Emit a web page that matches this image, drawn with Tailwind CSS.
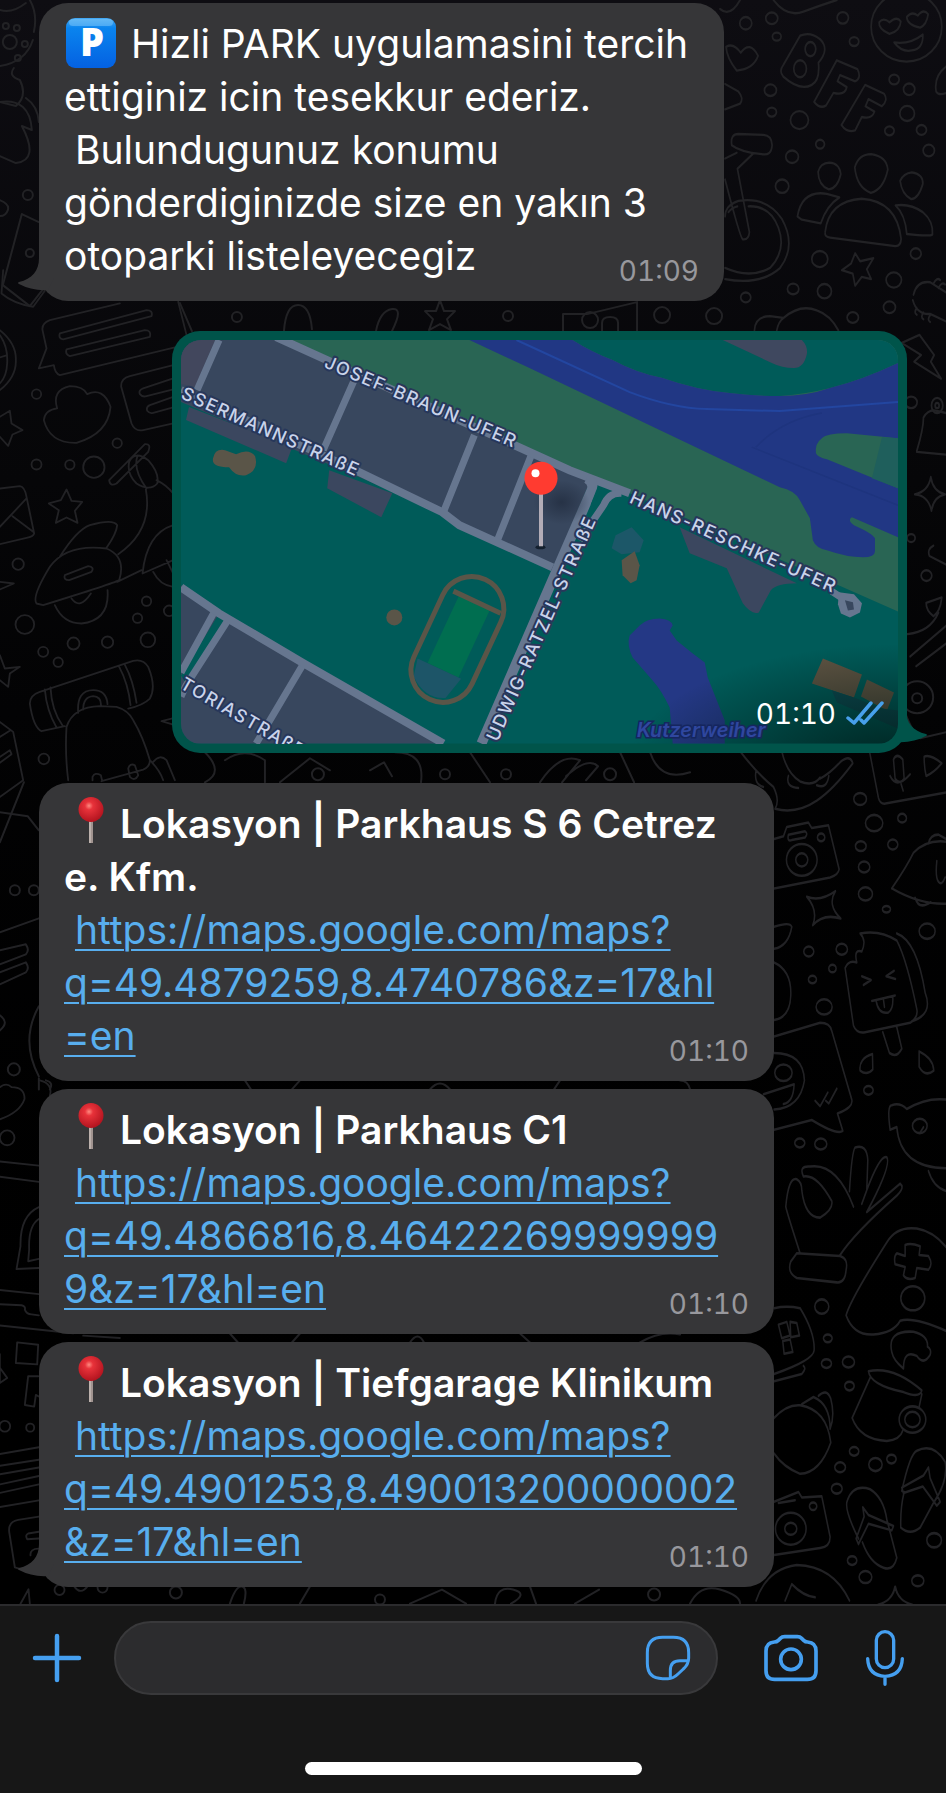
<!DOCTYPE html>
<html lang="tr">
<head>
<meta charset="utf-8">
<meta name="viewport" content="width=device-width, initial-scale=1">
<title>Hizli PARK</title>
<script src="https://cdn.jsdelivr.net/npm/@tailwindcss/browser@4"></script>
</head>
<body class="flex min-h-screen flex-col bg-black font-['Inter','Noto_Sans',sans-serif] text-white">

<main class="relative flex flex-1 flex-col overflow-hidden bg-linear-to-b from-[#0e0d12] via-[#060608] via-30% to-black pt-[3px] pr-[39px] pb-[17px] pl-[39px]">

  <!-- Doodle wallpaper -->
  <svg class="absolute inset-0 h-full w-full" viewBox="0 0 946 1603" preserveAspectRatio="xMidYMin slice" fill="none" stroke="#222225" stroke-width="2" stroke-linecap="round" stroke-linejoin="round" aria-hidden="true">
    <defs>
      <path id="star" d="M0-15L4-4 15-4 7 4 11 15 0 9-11 15-7 4-15-4-4-4Z"/>
      <path id="spark" d="M0-18Q3-3 17 0 3 3 0 17-3 3-17 0-3-3 0-18Z"/>
    </defs>
    <!-- top left -->
    <path d="M0 10Q12 14 26 3M30 0Q38 14 34 32M0 66Q26 62 33 40M14 68q-6 8 6 12Q28 96 16 106L0 102M26 98q12 8 13 24M0 102Q30 98 32 130L22 126Q40 160 16 163L0 156M0 200q10 4 8 10t-8 6M22 214L39 222M22 214L3 285 30 306 44 288"/>
    <circle cx="10" cy="42" r="7"/><circle cx="6" cy="26" r="3"/><circle cx="17" cy="28" r="3"/><circle cx="25" cy="44" r="3"/><circle cx="18" cy="58" r="3"/><circle cx="28" cy="195" r="5"/><circle cx="30" cy="253" r="4"/>
    <!-- between first bubble and map -->
    <path d="M180 303L192 331M284 331q2-26 14-26t14 24M376 331q4-20 16-22t0 22M563 331V314h24l50-12v29M602 331v-8q0-6 8-6t8 6v8"/>
    <use href="#star" x="440" y="315"/><circle cx="237" cy="317" r="5"/><circle cx="508" cy="316" r="5"/><circle cx="590" cy="320" r="8"/><circle cx="662" cy="315" r="8"/><circle cx="714" cy="316" r="8"/>
    <!-- right column, upper part -->
    <g transform="translate(720 0) scale(.3333 .4464)">
      <g stroke-width="5.2">
        <path d="M0 20Q30 40 60 0M160 0Q200 40 250 26T350 0M50 158Q20 130 18 105 40 95 62 118 90 90 114 125 100 155 50 158ZM15 188L55 205Q72 220 60 232L15 245M190 145L240 80Q270 70 300 88 330 110 295 140 300 180 275 190 240 205 190 172 175 160 190 145ZM350 135L412 155Q425 175 405 182L360 168 352 182 380 195Q375 215 340 208L318 236Q300 245 282 228ZM435 190L492 210Q505 225 485 238L445 222 436 238 463 250Q455 268 425 262L405 292Q380 298 364 280Z"/>
        <circle cx="271" cy="110" r="16"/><circle cx="240" cy="154" r="19"/>
        <ellipse cx="559" cy="60" rx="106" ry="78"/><path d="M508 76Q475 65 477 50 490 38 508 50 530 35 542 48 540 70 508 76ZM600 62Q560 55 560 38 575 24 593 35 610 18 624 32 620 55 600 62ZM522 95Q570 100 608 77 610 110 575 113 545 118 522 95Z"/>
        <path d="M680 148Q640 170 648 205 655 215 680 208M35 325Q30 300 55 300L130 302Q155 303 156 325 154 350 125 345Q60 340 35 325ZM98 345L52 378 88 520Q86 538 68 536 60 532 15 402M15 355L50 342M15 485Q15 460 55 450 140 440 185 490 230 550 180 600 120 640 15 625M25 475Q35 465 52 462M85 462Q150 460 175 510 200 560 150 600 90 625 15 600"/>
        <path d="M328 364Q358 365 362 390 352 422 326 424 295 415 294 385 300 365 328 364ZM453 345Q500 350 503 380 490 425 452 432 410 420 404 375 415 345 453 345ZM575 386Q610 390 608 412 595 445 573 446 545 435 540 405 550 388 575 386ZM315 520Q325 450 425 445 530 450 543 535 542 552 525 551L330 532Q313 530 315 520ZM232 485Q245 425 320 434L358 442Q320 460 302 500L245 492ZM526 460Q570 455 608 475 640 495 637 525 630 530 560 524Q555 480 526 460Z"/>
        <path d="M405 567L420 585 460 578 440 603 453 625 425 620 405 640 398 613 365 605 393 590ZM103 740Q105 708 150 708L190 712Q240 680 290 695 330 705 355 740M170 740Q175 720 190 712M580 660Q590 628 630 632L678 655M578 672Q590 705 630 703L678 720M640 635q10-15 20-8M655 645q10-15 20-8M590 690q-10 10 0 15M610 700q-10 10 0 15M630 706q-10 10 0 15M545 768L598 750 642 795 632 810 663 848 582 810 603 795Z"/>
        <path d="M590 1010Q610 960 610 935 625 915 650 920L678 925M590 1012L678 1018M632 1068Q638 1100 675 1107 640 1112 634 1144 625 1110 584 1107 625 1100 632 1068ZM640 1222Q620 1230 628 1245L680 1265M618 1350L665 1338Q660 1370 640 1380 618 1368 618 1350ZM562 1420Q630 1415 655 1372M570 1470L680 1400M588 1492L680 1440"/><circle cx="651" cy="908" r="17"/><circle cx="651" cy="908" r="6"/>
        <g><ellipse cx="77" cy="52" rx="18" ry="14"/><ellipse cx="155" cy="41" rx="18" ry="13"/><ellipse cx="368" cy="40" rx="17" ry="13"/><ellipse cx="402" cy="93" rx="14" ry="10"/><ellipse cx="170" cy="82" rx="13" ry="9"/><ellipse cx="151" cy="202" rx="18" ry="13"/><ellipse cx="155" cy="251" rx="14" ry="10"/><ellipse cx="238" cy="269" rx="27" ry="20"/><ellipse cx="300" cy="323" rx="13" ry="10"/><ellipse cx="216" cy="351" rx="19" ry="14"/><ellipse cx="186" cy="417" rx="20" ry="15"/><ellipse cx="522" cy="178" rx="15" ry="11"/><ellipse cx="567" cy="200" rx="17" ry="13"/><ellipse cx="561" cy="254" rx="22" ry="17"/><ellipse cx="604" cy="291" rx="15" ry="11"/><ellipse cx="508" cy="293" rx="14" ry="10"/><ellipse cx="626" cy="337" rx="17" ry="13"/><ellipse cx="587" cy="568" rx="16" ry="12"/><ellipse cx="299" cy="580" rx="24" ry="18"/><ellipse cx="521" cy="627" rx="23" ry="17"/><ellipse cx="219" cy="647" rx="17" ry="12"/><ellipse cx="313" cy="652" rx="21" ry="16"/><ellipse cx="77" cy="666" rx="15" ry="11"/><ellipse cx="508" cy="688" rx="18" ry="13"/><ellipse cx="398" cy="711" rx="17" ry="12"/><ellipse cx="573" cy="901" rx="18" ry="13"/><ellipse cx="573" cy="1205" rx="12" ry="9"/><ellipse cx="619" cy="1289" rx="16" ry="12"/></g>
      </g>
    </g>
    <circle cx="917" cy="697" r="16"/><circle cx="917" cy="698" r="5"/><path d="M904 710Q912 732 920 738L946 732"/>
    <!-- right column, lower part -->
    <g transform="translate(720 740) scale(.3333 .5485)" stroke-width="4.6">
      <path d="M60 20Q110 60 160 85 180 110 165 125 230 135 290 110 340 90 398 42 390 25 360 40 330 60 300 70M185 20Q200 60 240 75 280 85 300 68M108 55Q100 80 130 85M205 65Q195 85 235 87M290 82Q320 90 326 65M448 20L475 105Q480 118 500 115L680 95M520 35Q530 22 548 35L552 70Q540 82 525 70ZM510 65Q530 90 570 62M543 80L549 92M612 30Q630 25 665 42 640 60 618 65 612 50 612 30ZM162 180L190 175 200 158 265 150 275 160 325 155 357 235Q355 245 330 250L162 270M205 172Q200 185 215 182L255 177Q265 170 255 166Z"/>
      <ellipse cx="245" cy="218" rx="46" ry="29"/><ellipse cx="245" cy="218" rx="18" ry="12"/><ellipse cx="303" cy="177" rx="11" ry="7"/>
      <path d="M260 285Q300 295 346 275 320 300 362 325 310 315 278 337 295 310 260 285ZM515 270Q560 230 580 205 620 180 680 185M515 270Q600 300 680 298M585 287Q595 310 632 295M625 188Q630 172 655 172L678 180M650 220q-5 30 5 38t20-8M162 340Q210 330 215 340 205 375 162 380M162 405Q215 420 212 465 210 505 162 510"/>
      <path d="M420 352Q440 365 425 385 400 380 410 405 385 400 375 415L400 520Q410 535 435 532L570 515Q595 505 590 490 560 400 530 365 480 345 420 352ZM530 352Q590 365 615 460 640 500 575 512M488 532L508 570Q530 580 545 562L530 523M425 430L453 437 430 446M522 420L498 430 526 435M455 475L525 465M468 475Q475 500 505 496 520 490 518 468M490 473L493 486M162 540L300 515Q330 515 335 530L395 655Q400 670 352 680L368 712Q350 720 275 692L162 710M162 570Q250 570 253 620 240 670 162 673M130 645L222 627Q220 660 190 663M285 657L300 667 323 642M317 657L326 662 350 635M457 572Q415 580 420 602 440 612 458 600ZM597 567Q640 580 641 602 615 615 597 595ZM510 710Q500 665 515 665 540 660 560 672 620 650 680 655M510 710L530 705Q540 780 680 780M625 785Q640 815 680 822M600 715L610 705"/>
      <ellipse cx="190" cy="606" rx="26" ry="15"/><ellipse cx="599" cy="703" rx="22" ry="13"/>
      <path d="M240 935Q200 860 197 850 205 795 230 800 245 805 245 820 255 870 300 870 340 855 335 840 290 790 250 795 235 775 270 777 350 770 400 850M388 822Q395 750 405 742 440 735 443 765L440 820 425 845M440 820Q480 755 500 760 515 775 440 860L540 808Q555 815 530 830 400 900 358 940M230 935L360 940Q385 945 378 965 375 990 350 988L230 980Q200 970 212 950ZM378 1048Q390 1020 500 915 530 885 590 890 640 895 680 925M378 1048Q400 1085 460 1083 520 1080 540 1058 580 1050 680 1077M555 920Q570 915 600 922L597 938 625 940Q640 955 625 965L590 962 585 980Q560 985 550 975L555 960 525 955Q520 940 530 935L555 940Z"/>
      <ellipse cx="578" cy="1017" rx="36" ry="22"/>
      <path d="M162 1035Q200 1030 240 1035 285 1080 282 1112 280 1130 162 1155M162 1168L245 1155Q260 1145 250 1140M175 1065L200 1060 210 1085 185 1090ZM210 1060L230 1062 238 1085 212 1088ZM188 1095L210 1092 218 1115 192 1118ZM515 1115Q500 1075 580 1078 625 1085 622 1105 635 1110 630 1120 610 1140 590 1122 550 1110 550 1145 520 1130 515 1115ZM445 1150Q520 1140 605 1185 600 1200 550 1188 450 1175 445 1150ZM450 1162L396 1235Q420 1275 500 1277 540 1275 548 1258M605 1192L597 1215M162 1235Q200 1210 240 1212 320 1220 332 1280 300 1335 240 1337 190 1325 162 1300M245 1210L280 1197Q330 1210 330 1255 345 1230 332 1200 320 1180 295 1195M162 1388L235 1370 245 1380 305 1378 330 1452Q330 1470 300 1472L162 1485M175 1390L225 1385"/>
      <ellipse cx="577" cy="1238" rx="40" ry="24"/><ellipse cx="577" cy="1238" rx="23" ry="14"/><ellipse cx="212" cy="1437" rx="46" ry="29"/><ellipse cx="212" cy="1437" rx="18" ry="11"/><ellipse cx="279" cy="1396" rx="11" ry="7"/>
      <path d="M415 1455Q370 1400 382 1385 400 1355 450 1365 490 1380 500 1420L530 1490Q520 1515 490 1508 450 1500 427 1462M408 1455L432 1415 428 1398 445 1412 520 1432 515 1440 445 1428 415 1465ZM545 1368Q570 1300 590 1295 640 1280 675 1315 685 1350 640 1390L600 1435Q570 1450 542 1435 540 1400 552 1370M545 1362L610 1340 625 1325 630 1345 660 1388 650 1395 608 1360 550 1372ZM108 1568Q140 1510 230 1503 340 1505 388 1568M195 1568L215 1538Q250 1560 285 1562"/>
      <g><ellipse cx="420" cy="107" rx="19" ry="11"/><ellipse cx="462" cy="151" rx="26" ry="15"/><ellipse cx="546" cy="142" rx="13" ry="8"/><ellipse cx="518" cy="190" rx="15" ry="9"/><ellipse cx="422" cy="193" rx="16" ry="9"/><ellipse cx="432" cy="231" rx="17" ry="10"/><ellipse cx="436" cy="280" rx="21" ry="12"/><ellipse cx="499" cy="308" rx="12" ry="6"/><ellipse cx="621" cy="348" rx="24" ry="14"/><ellipse cx="266" cy="385" rx="15" ry="9"/><ellipse cx="365" cy="381" rx="17" ry="10"/><ellipse cx="337" cy="416" rx="11" ry="7"/><ellipse cx="277" cy="436" rx="12" ry="7"/><ellipse cx="312" cy="486" rx="24" ry="14"/><ellipse cx="445" cy="638" rx="14" ry="8"/><ellipse cx="239" cy="734" rx="15" ry="8"/><ellipse cx="302" cy="736" rx="18" ry="10"/><ellipse cx="305" cy="1032" rx="21" ry="13"/><ellipse cx="323" cy="1090" rx="13" ry="7"/><ellipse cx="319" cy="1136" rx="15" ry="8"/><ellipse cx="385" cy="1133" rx="18" ry="10"/><ellipse cx="388" cy="1177" rx="14" ry="8"/><ellipse cx="402" cy="1296" rx="14" ry="8"/><ellipse cx="360" cy="1325" rx="16" ry="9"/><ellipse cx="466" cy="1320" rx="20" ry="12"/><ellipse cx="514" cy="1310" rx="14" ry="8"/><ellipse cx="350" cy="1364" rx="16" ry="9"/><ellipse cx="642" cy="1458" rx="22" ry="13"/><ellipse cx="396" cy="1495" rx="14" ry="8"/><ellipse cx="436" cy="1525" rx="19" ry="11"/><ellipse cx="593" cy="1532" rx="18" ry="10"/></g>
    </g>
    <!-- left column beside the map -->
    <g transform="translate(0 270) scale(.3333)" stroke-width="5.5">
      <path d="M10 0L5 70Q40 100 100 110L135 62M0 180Q50 220 48 270 50 320 0 360M0 195Q25 230 22 280 20 320 0 340M0 262L22 255M360 100L150 150Q125 160 128 180L140 235 117 295 162 285Q165 310 180 315L525 232M180 190L440 120Q460 120 455 138L190 208Q175 205 180 190ZM200 238L435 180Q455 180 450 200L210 258Q195 252 200 238ZM520 285L390 318Q362 325 364 350L395 460Q405 485 430 480L520 460M520 325L430 355Q415 360 420 372 428 382 440 378L520 358M520 380L450 405Q438 410 442 422 450 432 460 428L520 412M172 415Q155 360 210 348 250 348 262 372 310 350 332 410 325 490 230 518 150 520 132 450 135 420 172 415ZM535 95L560 195"/>
      <path d="M0 440L30 422 35 460 68 480 38 493 25 527 0 500M0 655L60 648Q75 650 80 680L103 790Q100 800 80 803L0 822M0 770L80 685M38 738L100 785M200 658L215 692 247 695 225 722 233 758 200 742 168 758 177 720 147 700 183 690ZM328 630L435 522Q455 520 445 545L350 640Q330 650 328 630ZM388 575Q405 540 445 570 480 610 472 640 450 665 410 640 380 610 388 575ZM412 560Q400 600 440 655M470 630Q500 645 520 670M438 658Q460 780 355 852M180 860Q230 780 270 765 340 745 352 765 350 790 320 833M110 1000Q95 980 150 890 200 820 320 835 380 860 358 930 340 940 130 1005ZM195 915L265 888Q285 890 275 905L208 930Q190 930 195 915ZM165 1005Q190 1060 245 1060 330 1050 323 960M215 985Q240 1020 273 970M352 935L425 900M520 765Q440 790 428 910L520 870M460 905Q480 945 520 950M500 870L520 910M0 935L42 940 0 958M0 1155L15 1195 60 1190 30 1210 25 1250 0 1230"/>
      <path d="M90 1300Q90 1275 120 1265L400 1172Q430 1165 445 1190 470 1250 450 1285 430 1305 385 1315M90 1300Q100 1370 125 1383L195 1368M135 1258Q140 1320 170 1372M152 1252Q155 1320 188 1366M358 1190Q385 1240 392 1305M375 1184Q400 1230 410 1298M235 1328Q230 1260 280 1260 320 1260 323 1302M250 1318Q250 1280 280 1278 305 1280 303 1305M205 1530Q195 1450 200 1370 220 1310 300 1308L350 1310Q385 1320 400 1350 430 1400 450 1470 450 1490 430 1498L305 1533M278 1530V1520Q285 1505 303 1515L307 1532M385 1495Q390 1478 405 1485L415 1515Q405 1535 390 1520ZM450 1470Q480 1500 490 1530M460 1475Q480 1450 500 1470L525 1530M0 1355L40 1385 70 1530 0 1580M0 1400L32 1380M0 1460L30 1440 35 1452 0 1478M515 1345L485 1353 515 1362"/>
      <circle cx="110" cy="372" r="14"/><circle cx="352" cy="519" r="14"/><circle cx="282" cy="591" r="32"/><circle cx="210" cy="584" r="14"/><circle cx="110" cy="583" r="15"/><circle cx="55" cy="882" r="17"/><circle cx="75" cy="1063" r="28"/><circle cx="221" cy="1120" r="18"/><circle cx="130" cy="1145" r="15"/><circle cx="175" cy="1176" r="14"/><circle cx="323" cy="1116" r="17"/><circle cx="444" cy="1109" r="22"/><circle cx="440" cy="993" r="14"/><circle cx="413" cy="1044" r="14"/><circle cx="508" cy="1022" r="16"/><circle cx="132" cy="1466" r="16"/>
    </g>
    <!-- between map and second bubble -->
    <path d="M205 752q20 20 0 30M225 760q20-14 40 0v22M280 782l30-24 20 12M370 770l14-8 8 14M395 752q30 0 26 30M470 752l20 30M540 782q20-30 40-22l-18 22M566 776q22-20 32-10l-12 14M620 752l14 30M650 752q10 30 40 20"/>
    <circle cx="318" cy="774" r="6"/><circle cx="445" cy="774" r="5"/><circle cx="506" cy="774" r="5"/><circle cx="610" cy="774" r="6"/>
    <!-- left column, lower part -->
    <path d="M24 782L0 842M0 812L28 816 39 830M0 932L39 918M0 950L26 944Q30 950 26 954L0 964M0 972L26 962Q30 968 26 972L0 984M39 1006Q20 1040 39 1076M0 1015Q10 1022 0 1030M46 1080q8 2 4 9M39 1078v11"/>
    <circle cx="15" cy="890" r="5"/><circle cx="34" cy="890" r="5"/><circle cx="14" cy="1069" r="6"/>
    <g transform="translate(0 1080) scale(.3333 .338)" stroke-width="5.5">
      <path d="M0 20Q20 5 35 20 75 20 74 55 60 95 0 115M120 0Q160 10 150 45M0 240L117 252M0 285L117 300M117 375Q60 400 62 490L50 558 117 555M117 410Q85 430 88 500L85 535 117 528M0 620L117 632M0 662L65 665Q78 668 75 678 80 692 95 692L117 695M0 725L220 748M250 755L360 762M52 775L115 782 112 840 48 836ZM115 875L85 875 75 960 103 965 108 930 117 935M0 810V895L22 880 0 850M0 1105L117 1085M0 1140L117 1122M0 1165L117 1145M0 1195L117 1170M0 1220L117 1195M0 1262L117 1242M117 1290L55 1300Q25 1305 28 1335L45 1440 60 1445M117 1335L85 1340Q75 1345 82 1357L117 1355M117 1385Q90 1385 92 1405M62 1548L86 1505 90 1548"/>
      <circle cx="22" cy="170" r="22"/><circle cx="15" cy="1023" r="16"/><circle cx="91" cy="1027" r="12"/><circle cx="179" cy="1507" r="15"/><circle cx="308" cy="1500" r="15"/><path d="M222 1495q20 30 42 0"/>
    </g>
    <!-- slivers visible between and below the location bubbles -->
    <path d="M245 1080l6 9M300 1080l-8 9M430 1089q10-12 20 0M560 1080l-6 9M680 1080q8 0 10 9M230 1333l8 9M300 1333l-8 9M410 1342q8-12 14 0M520 1333l10 9M640 1342q20-12 40-8M230 1603q6-18 12-17t2 17M300 1603l10-17M410 1603l32-14 24 14M495 1603q2-18 18-14t-2 14M530 1586l6 17M575 1603l24-14M690 1603q10-20 30-14t20 14"/>
    <circle cx="176" cy="1592" r="6"/><circle cx="380" cy="1599" r="5"/><circle cx="654" cy="1594" r="6"/><use href="#spark" x="895" y="1604"/>
  </svg>

  <section class="relative flex flex-col gap-[30px] text-[39px] leading-[53px]">

    <!-- Greeting -->
    <article class="relative w-full max-w-[685px] rounded-[29px] bg-[#363638] px-[25px] pt-[14px] pb-[19px]">
      <svg class="absolute bottom-[9px] -left-[21px] h-[34px] w-[36px]" viewBox="0 0 36 34" fill="#363638" aria-hidden="true"><path d="M21 0C21 13 14 21 1 24Q-1 25 1 26Q14 33 30 32L36 20V0Z"/></svg>
      <p class="relative">
        <svg class="mr-[4px] ml-[2px] inline-block size-[50px] overflow-visible align-[-10px]" viewBox="0 0 50 50" role="img" aria-label="P">
          <defs><linearGradient id="pg" x1="0" y1="0" x2="0" y2="1"><stop offset="0" stop-color="#45a9f3"/><stop offset=".2" stop-color="#0a84ee"/><stop offset="1" stop-color="#0461e2"/></linearGradient></defs>
          <rect width="50" height="50" rx="9" fill="url(#pg)"/><rect x="3" y="1" width="44" height="7" rx="4" fill="#8dd0fb" opacity=".45"/>
          <text x="26" y="38" text-anchor="middle" font-family="Open Sans, sans-serif" font-weight="800" font-size="38" fill="#fff">P</text>
        </svg>
        Hizli PARK uygulamasini tercih<br>ettiginiz icin tesekkur ederiz.<br>&nbsp;Bulundugunuz konumu<br>gönderdiginizde size en yakın 3<br>otoparki listeleyecegiz
      </p>
      <time class="absolute right-[25px] bottom-[12px] text-[28px] leading-[36px] text-[#98989d] tabular-nums">01:09</time>
    </article>

    <!-- Shared location -->
    <article class="relative w-full max-w-[735px] self-end rounded-[28px] bg-[#00544a] p-[9px]">
      <svg class="absolute -right-[20px] bottom-[9px] h-[34px] w-[36px]" viewBox="0 0 36 34" fill="#00544a" aria-hidden="true"><path d="M15 0C15 13 22 21 35 24Q37 25 35 26Q22 33 6 32L0 20V0Z"/></svg>
      <div class="relative overflow-hidden rounded-[20px]">
        <svg class="block h-auto w-full" viewBox="0 0 716 403" role="img" aria-label="Josef-Braun-Ufer">
          <defs>
            <radialGradient id="shade" gradientUnits="userSpaceOnUse" cx="716" cy="425" r="270" gradientTransform="translate(716 425) scale(1 .45) translate(-716 -425)"><stop offset="0" stop-color="#001410" stop-opacity=".8"/><stop offset=".45" stop-color="#001410" stop-opacity=".45"/><stop offset="1" stop-color="#001410" stop-opacity="0"/></radialGradient>
            <radialGradient id="pinshade"><stop offset="0" stop-color="#222d40" stop-opacity=".8"/><stop offset="1" stop-color="#222d40" stop-opacity="0"/></radialGradient>
          </defs>
          <rect width="716" height="403" fill="#005b59"/>
          <path d="M95 0H716V271L448 153 388 132Z" fill="#296554"/>
          <path d="M391 0Q410 12 431 20 455 33 481 38 515 50 548 53 575 56 598 56 625 54 648 48 680 40 716 23V0Z" fill="#005b59"/>
          <path d="M541 0H620Q626 6 625 14 622 28 612 28 600 28 590 23Z" fill="#3f485f"/>
          <path d="M288 0L348 28 598 147Q613 150 618 160L628 178 631 200Q634 208 645 210 665 217 681 217 693 217 693 211V198Q690 193 672 185 665 180 670 177L716 197V23Q680 40 648 48 625 56 598 56 575 56 548 53 515 50 481 38 455 33 431 20 410 12 391 0Z" fill="#213784"/>
          <path d="M716 98L665 93Q645 93 640 98 633 103 634 113 636 117 645 119L716 148Z" fill="#296554"/>
          <path d="M716 98V148L690 138 700 97Z" fill="#1f5f5c"/>
          <path d="M335 0L348 6 448 52Q490 68 525 69L598 71 716 62" fill="none" stroke="#2346a0" stroke-width="2"/>
          <path d="M574 107Q600 80 640 73M570 107L716 165" fill="none" stroke="#1e347e" stroke-width="1.5"/>
          <path d="M0 0H95L388 132 408 142 371 230 278 185 261 172 0 62Z" fill="#38475e"/>
          <path d="M0 0H34L14 47 0 44Z" fill="#42475d"/>
          <path d="M8 67L5 80 105 123 111 107ZM148 130L146 148 200 177 211 153ZM498 187L508 213 545 228 561 263Q570 275 577 272L589 250Q595 243 615 243Z" fill="#3b475f"/>
          <path d="M0 245L38 273 121 322 260 403H0Z" fill="#38475e"/>
          <path d="M38 273L45 277 6 345 0 335Z" fill="#005b59"/>
          <g fill="none" stroke="#66768f" stroke-width="7">
            <path d="M38 0L16 50M173 40L142 110M293 95L262 172M351 112L316 200M33 272L0 332M48 278L5 345 0 356M123 322L75 403"/>
            <path d="M95-3L388 130 448 153M0 50L178 132 261 172 278 185 371 227M0 247L38 273 121 322 262 403" stroke-width="8"/>
            <path d="M300 403L410 150Q413 142 405 138" stroke-width="10"/>
            <path d="M398 200L422 165Q427 152 440 153M650 251L662 259" stroke-width="7"/>
          </g>
          <path d="M418 147L411 165" stroke="#005b59" stroke-width="4"/>
          <path d="M657 252L672 254 680 263 678 272 668 277 659 273 656 264Z" fill="#66768f"/><path d="M663 260L671 262 672 269 666 270Z" fill="#38475e"/>
          <path d="M32 118Q34 108 44 110L55 114Q68 108 74 116 78 130 65 135 55 137 48 127 30 127 32 118Z" fill="#5a5548"/>
          <circle cx="213" cy="277" r="8" fill="#5a5548"/>
          <g transform="translate(276 299) rotate(25)"><rect x="-17" y="-40" width="34" height="74" fill="#006e50"/><path d="M-28 34H20L14 58Q-4 68-24 52Z" fill="#1d5568"/><rect x="-32" y="-66" width="64" height="132" rx="32" fill="none" stroke="#5a5548" stroke-width="5"/><path d="M-24-42H28" stroke="#5a5548" stroke-width="5"/></g>
          <path d="M434 195L450 187 462 200 458 212 440 214 430 208Z" fill="#1c5768"/>
          <path d="M440 220L453 211 458 225 455 240 449 243 441 235Z" fill="#5a5548"/>
          <path d="M458 285Q465 278 478 278 490 279 491 285L488 290 495 300 511 313 523 322 526 337 543 380V403H491L488 367Q480 350 471 340L451 317Q445 305 448 295Z" fill="#243885"/>
          <path d="M641 318L630 343 672 357 680 334ZM685 339L679 356 705 370 712 352Z" fill="#5f5443"/>
          <path d="M650 350L655 362 716 388V370L700 368 672 357Z" fill="#0c4a52"/>
          <rect width="716" height="403" fill="url(#shade)"/>
          <g font-family="Inter, sans-serif" font-size="18" font-weight="500" letter-spacing="1.5" fill="#c9d3ea" stroke="#27375a" stroke-width="4" stroke-linejoin="round" paint-order="stroke">
            <text transform="translate(142 27) rotate(23)">JOSEF-BRAUN-UFER</text>
            <text transform="translate(-1 58) rotate(24)">SSERMANNSTRAßE</text>
            <text transform="translate(447 162) rotate(24)">HANS-RESCHKE-UFER</text>
            <text transform="translate(-2 347) rotate(30)">TORIASTRAßE</text>
            <text transform="translate(316 402) rotate(-66)">UDWIG-RATZEL-STRAßE</text>
          </g>
          <text x="455" y="396" font-family="Inter, sans-serif" font-size="20" font-style="italic" font-weight="600" fill="#2f479f" stroke="#15265e" stroke-width="3" paint-order="stroke">Kutzerweiher</text>
          <ellipse cx="380" cy="162" rx="28" ry="22" fill="url(#pinshade)"/>
          <ellipse cx="359" cy="207" rx="5" ry="2" fill="#14202e"/>
          <path d="M359.500 150V206" stroke="#b3adb7" stroke-width="4"/>
          <circle cx="359.500" cy="138" r="16.500" fill="#ff3b30"/><circle cx="354" cy="133" r="4" fill="#fff"/>
        </svg>
        <div class="absolute right-[14px] bottom-[12px] flex items-center gap-[10px] text-[28px] leading-[36px]">
          <time class="tabular-nums">01:10</time>
          <svg class="h-[25px] w-[38px]" viewBox="0 0 38 25" fill="none" stroke="#47a0ec" stroke-width="3.500" stroke-linecap="round" stroke-linejoin="round" role="img" aria-label="✓✓"><path d="M2 17L8 22 25 2M18 22L36 2M15 19L18 22"/></svg>
        </div>
      </div>
    </article>

    <!-- Nearest car parks -->
    <div class="flex flex-col gap-[8px]">
      <article class="relative w-full max-w-[735px] rounded-[29px] bg-[#363638] px-[25px] pt-[14px] pb-[19px]">
        <p class="font-semibold"><svg class="mr-[16px] ml-[14px] inline-block h-[46px] w-[26px] align-[-5px]" viewBox="0 0 26 46" role="img" aria-label="📍"><defs><radialGradient id="ball" cx=".42" cy=".35" r=".65"><stop offset="0" stop-color="#ff8a80"/><stop offset=".25" stop-color="#e8323a"/><stop offset="1" stop-color="#b3141f"/></radialGradient></defs><path d="M13 22V46" stroke="#a0938f" stroke-width="4"/><path d="M12 23V46" stroke="#d8cec8" stroke-width="1"/><circle cx="13" cy="12.500" r="12.500" fill="url(#ball)"/></svg>Lokasyon | Parkhaus S 6 Cetrez<br>e. Kfm.</p>
        <p>&nbsp;<a class="text-[#58aeee] underline decoration-2 underline-offset-[5px]" href="https://maps.google.com/maps?q=49.4879259,8.4740786&amp;z=17&amp;hl=en">https://maps.google.com/maps?<br>q=49.4879259,8.4740786&amp;z=17&amp;hl<br>=en</a></p>
        <time class="absolute right-[25px] bottom-[12px] text-[28px] leading-[36px] text-[#98989d] tabular-nums">01:10</time>
      </article>

      <article class="relative w-full max-w-[735px] rounded-[29px] bg-[#363638] px-[25px] pt-[14px] pb-[19px]">
        <p class="font-semibold"><svg class="mr-[16px] ml-[14px] inline-block h-[46px] w-[26px] align-[-5px]" viewBox="0 0 26 46" role="img" aria-label="📍"><path d="M13 22V46" stroke="#a0938f" stroke-width="4"/><path d="M12 23V46" stroke="#d8cec8" stroke-width="1"/><circle cx="13" cy="12.500" r="12.500" fill="url(#ball)"/></svg>Lokasyon | Parkhaus C1</p>
        <p>&nbsp;<a class="text-[#58aeee] underline decoration-2 underline-offset-[5px]" href="https://maps.google.com/maps?q=49.4866816,8.464222699999999&amp;z=17&amp;hl=en">https://maps.google.com/maps?<br>q=49.4866816,8.46422269999999<br>9&amp;z=17&amp;hl=en</a></p>
        <time class="absolute right-[25px] bottom-[12px] text-[28px] leading-[36px] text-[#98989d] tabular-nums">01:10</time>
      </article>

      <article class="relative w-full max-w-[735px] rounded-[29px] bg-[#363638] px-[25px] pt-[14px] pb-[19px]">
        <svg class="absolute bottom-[9px] -left-[21px] h-[34px] w-[36px]" viewBox="0 0 36 34" fill="#363638" aria-hidden="true"><path d="M21 0C21 13 14 21 1 24Q-1 25 1 26Q14 33 30 32L36 20V0Z"/></svg>
        <p class="relative font-semibold"><svg class="mr-[16px] ml-[14px] inline-block h-[46px] w-[26px] align-[-5px]" viewBox="0 0 26 46" role="img" aria-label="📍"><path d="M13 22V46" stroke="#a0938f" stroke-width="4"/><path d="M12 23V46" stroke="#d8cec8" stroke-width="1"/><circle cx="13" cy="12.500" r="12.500" fill="url(#ball)"/></svg>Lokasyon | Tiefgarage Klinikum</p>
        <p class="relative">&nbsp;<a class="text-[#58aeee] underline decoration-2 underline-offset-[5px]" href="https://maps.google.com/maps?q=49.4901253,8.490013200000002&amp;z=17&amp;hl=en">https://maps.google.com/maps?<br>q=49.4901253,8.490013200000002<br>&amp;z=17&amp;hl=en</a></p>
        <time class="absolute right-[25px] bottom-[12px] text-[28px] leading-[36px] text-[#98989d] tabular-nums">01:10</time>
      </article>
    </div>
  </section>
</main>

<footer class="border-t-2 border-[#2b2b2d] bg-[#171717] pt-[15px] pb-[19px]">
  <form class="flex items-center pr-[38px] pl-[32px] text-[#459ff0]">
    <button type="button" class="size-[50px] shrink-0" aria-label="+">
      <svg class="size-full" viewBox="0 0 50 50" fill="none" stroke="currentColor" stroke-width="4.500" stroke-linecap="round"><path d="M25 3V47M3 25H47"/></svg>
    </button>
    <div class="relative ml-[32px] flex-1">
      <input type="text" aria-label="Mesaj" class="block h-[74px] w-full rounded-full border-2 border-[#39393b] bg-[#2c2c2e] pr-[84px] pl-[28px] text-[36px] text-white outline-none">
      <button type="button" class="absolute top-[13px] right-[26px] size-[48px]" aria-label="Sticker">
        <svg class="size-full" viewBox="40 69 144 144" fill="none" stroke="currentColor" stroke-width="9" stroke-linecap="round" stroke-linejoin="round"><path d="M112 203H96Q50 203 50 157V125Q50 79 96 79H128Q174 79 174 125V141Q174 160 158 174L142 189Q128 203 112 203ZM119 201V178Q119 149 148 149H172"/></svg>
      </button>
    </div>
    <button type="button" class="ml-[44px] h-[50px] w-[58px] shrink-0" aria-label="Kamera">
      <svg class="size-full" viewBox="395 66 174 150" fill="none" stroke="currentColor" stroke-width="11" stroke-linejoin="round"><path d="M432 93Q439 93 444 88L450 82Q455 77 463 77H501Q509 77 514 82L520 88Q525 93 532 93 557 95 557 120V179Q557 205 531 205H433Q407 205 407 179V120Q407 95 432 93Z"/><circle cx="482" cy="145" r="31"/></svg>
    </button>
    <button type="button" class="ml-[42px] h-[60px] w-[46px] shrink-0" aria-label="Mikrofon">
      <svg class="size-full" viewBox="697 54 138 180" fill="none" stroke="currentColor" stroke-width="10" stroke-linecap="round"><rect x="740" y="65" width="52" height="108" rx="26"/><path d="M714 146Q716 197 766 199 816 197 818 146M766 200V223"/></svg>
    </button>
  </form>
  <div class="mx-auto mt-[67px] h-[13px] w-[337px] rounded-full bg-white"></div>
</footer>
</body>
</html>
